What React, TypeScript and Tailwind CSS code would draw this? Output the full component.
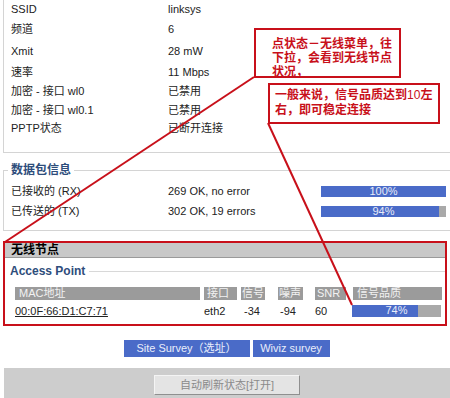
import React from 'react';

// --- data ---
const wirelessRows: [string, string, string][] = [
  ['SSID', 'linksys', 'h-[19px]'],
  ['频道', '6', 'h-[21px]'],
  ['Xmit', '28 mW', 'h-[22px]'],
  ['速率', '11 Mbps', 'h-[20px]'],
  ['加密 - 接口 wl0', '已禁用', 'h-[19px]'],
  ['加密 - 接口 wl0.1', '已禁用', 'h-[18px]'],
  ['PPTP状态', '已断开连接', 'h-[18px]'],
];

const packetRows = [
  { label: '已接收的 (RX)', value: '269 OK, no error', pct: 100 },
  { label: '已传送的 (TX)', value: '302 OK, 19 errors', pct: 94 },
];

const FONT = { fontFamily: '"Liberation Sans", "Noto Sans CJK SC", sans-serif' };

function Bar({ pct, className }: { pct: number; className: string }) {
  return (
    <div className={`relative bg-[#a9a9a9] ${className}`}>
      <div className="absolute inset-y-0 left-0 bg-[#4a6bc8]" style={{ width: `${pct}%` }} />
      <div className="relative text-center text-[11px] leading-[11px] text-[#e8ecf8]">{pct}%</div>
    </div>
  );
}

const App: React.FC = () => {
  return (
    <div className="relative w-[450px] h-[398px] overflow-hidden bg-white text-[11px] text-[#222]" style={FONT}>
      {/* 无线 */}
      <div className="ml-[3px] h-[153px] border-l border-b border-[#d4d4d4]">
        {wirelessRows.map(([k, v, h]) => (
          <div key={k} className={`flex items-center ${h}`}>
            <span className="w-[164px] pl-[7px]">{k}</span>
            <span>{v}</span>
          </div>
        ))}
      </div>

      {/* 数据包信息 */}
      <fieldset className="ml-[3px] mt-[10px] border-l border-t border-b border-r-0 border-[#d4d4d4] pb-[9px]">
        <legend className="ml-[4px] px-[3px] font-bold text-[12px] leading-[14px] text-[#2e4d7b]">数据包信息</legend>
        <div className="pt-[4px]">
          {packetRows.map((r) => (
            <div key={r.label} className="flex items-center h-[20px]">
              <span className="w-[164px] pl-[7px]">{r.label}</span>
              <span className="w-[153px]">{r.value}</span>
              <Bar pct={r.pct} className="w-[125px] h-[11px]" />
            </div>
          ))}
        </div>
      </fieldset>

      {/* 无线节点 */}
      <div className="ml-[3px] mt-[10px] w-[444px] h-[85px] border-2 border-[#c8101a]">
        <div className="h-[15px] bg-[#c8c8c8] border-b border-[#9a9a9a] pl-[6px] font-bold text-[12px] leading-[15px] text-black">
          无线节点
        </div>
        <div className="flex items-center mt-[6px] h-[14px]">
          <span className="pl-[5px] pr-[4px] font-bold text-[12px] text-[#2e4d7b]">Access Point</span>
          <div className="flex-1 border-t border-[#d8d8d8]" />
        </div>
        <div className="flex mt-[9px] h-[13px] text-[11px] leading-[13px] text-[#f2f2f2] whitespace-nowrap">
          <div className="ml-[10px] w-[185px] pl-[4px] bg-[#9b9b9b]">MAC地址</div>
          <div className="ml-[4px] w-[33px] pl-[3px] bg-[#9b9b9b]">接口</div>
          <div className="ml-[4px] w-[24px] pl-[1px] bg-[#9b9b9b]">信号</div>
          <div className="ml-[13px] w-[25px] pl-[1px] bg-[#9b9b9b]">噪声</div>
          <div className="ml-[12px] w-[31px] pl-[2px] bg-[#9b9b9b]">SNR</div>
          <div className="ml-[7px] w-[89px] pl-[4px] bg-[#9b9b9b]">信号品质</div>
        </div>
        <div className="flex items-center mt-[5px] h-[12px] text-[#222]">
          <a className="ml-[10px] w-[189px] underline">00:0F:66:D1:C7:71</a>
          <span className="w-[40px]">eth2</span>
          <span className="w-[36px]">-34</span>
          <span className="w-[35px]">-94</span>
          <span className="w-[37px]">60</span>
          <Bar pct={74} className="w-[89px] h-[12px]" />
        </div>
      </div>

      {/* buttons */}
      <div className="flex justify-center gap-[3px] mt-[14px] pl-[3px]">
        <button className="w-[126px] h-[17px] bg-[#4a6bc8] text-[11px] text-[#e9eefb]">Site Survey（选址）</button>
        <button className="w-[77px] h-[17px] bg-[#4a6bc8] text-[11px] text-[#e9eefb]">Wiviz survey</button>
      </div>
      <div className="ml-[4px] mt-[11px] h-[30px] bg-[#cdcdcd] flex justify-center pt-[7px]">
        <button className="w-[146px] h-[20px] bg-[#e4e4e4] border border-[#f4f4f4] border-r-[#8f8f8f] border-b-[#8f8f8f] text-[11px] text-[#8a8a8a]">
          自动刷新状态[打开]
        </button>
      </div>

      {/* annotation lines */}
      <svg className="absolute inset-0 pointer-events-none" width="450" height="398">
        <line x1="254" y1="77" x2="5" y2="242" stroke="#c8101a" strokeWidth="2" />
        <line x1="268" y1="123" x2="352" y2="305" stroke="#c8101a" strokeWidth="2" />
      </svg>

      {/* callouts */}
      <div className="absolute left-[254px] top-[28px] w-[147px] h-[50px] border-2 border-[#c8101a] bg-white pl-[16px] pt-[7px] pr-[3px] text-[12px] leading-[14px] font-bold text-[#c8101a]">
        点状态－无线菜单，往下拉，会看到无线节点状况，
      </div>
      <div className="absolute left-[268px] top-[83px] w-[172px] h-[41px] border-2 border-[#c8101a] bg-white pl-[5px] pt-[3px] text-[12px] leading-[15px] font-bold text-[#c8101a]">
        一般来说，信号品质达到<span className="font-normal">10</span>左右，即可稳定连接
      </div>
    </div>
  );
};

export default App;
